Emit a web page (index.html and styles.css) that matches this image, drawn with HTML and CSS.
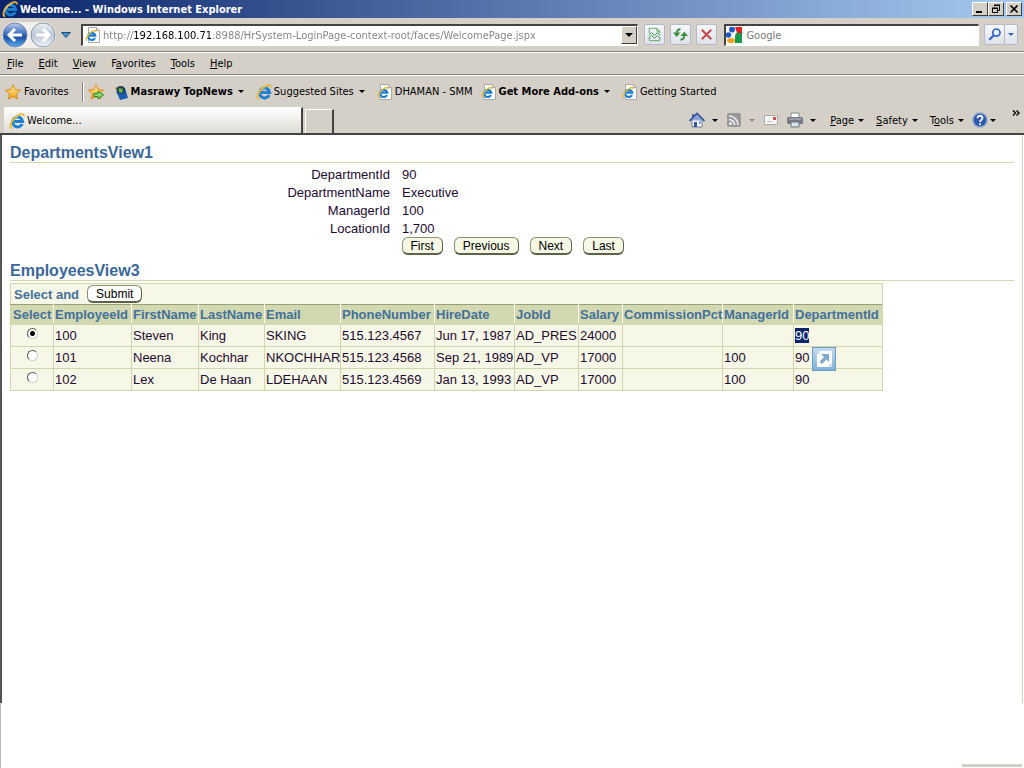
FILE: index.html
```
<!DOCTYPE html>
<html lang="en">
<head>
    <meta charset="UTF-8">
    <title>Welcome...</title>
    <link rel="stylesheet" href="styles.css">
</head>
<body>
<svg class="sprites" aria-hidden="true">
    <defs>
        <linearGradient id="blue" x1="0" y1="0" x2="0" y2="1">
            <stop offset="0" stop-color="#b9cbea"/>
            <stop offset=".4" stop-color="#4a78c4"/>
            <stop offset=".6" stop-color="#1d4fa8"/>
            <stop offset="1" stop-color="#5bb2f0"/>
        </linearGradient>
        <linearGradient id="silver" x1="0" y1="0" x2="0" y2="1">
            <stop offset="0" stop-color="#eceff5"/>
            <stop offset=".5" stop-color="#bcc6d8"/>
            <stop offset="1" stop-color="#eef3fa"/>
        </linearGradient>
        <linearGradient id="gold" x1="0" y1="0" x2="0" y2="1">
            <stop offset="0" stop-color="#fff3a0"/>
            <stop offset="1" stop-color="#f5a011"/>
        </linearGradient>
    </defs>
    <symbol id="ie" viewBox="0 0 16 16">
        <path d="M13.200 11A5 5 0 1 1 13.600 8.400H5.500" fill="none" stroke="#1a7fd0" stroke-width="3"/>
        <path d="M4.200 7.200A4.600 4.600 0 0 1 9.500 4" fill="none" stroke="#62c4f4" stroke-width="1.400"/>
        <path d="M3.200 15C.2 15.400 1 9.600 5.500 5 9.500 1 15.300-.6 14.900 3.400" fill="none" stroke="#edb92f" stroke-width="1.800"/>
    </symbol>
    <symbol id="page" viewBox="0 0 16 16">
        <path d="M3.500.500h8l3 3v12h-11z" fill="#fff" stroke="#a8a8a8"/>
        <path d="M11.500.500v3h3" fill="#ddd" stroke="#a8a8a8"/>
        <path d="M10 11A3.600 3.600 0 1 1 10.300 8.700H4.500" fill="none" stroke="#1a7fd0" stroke-width="2.200"/>
        <path d="M2 13.500C-.2 12.500 3 7.500 6 5.200 9 3 11.500 3 11 5" fill="none" stroke="#edb92f" stroke-width="1.400"/>
    </symbol>
    <symbol id="star" viewBox="0 0 16 16">
        <path d="M8 .8l2.200 4.800 5.200.6-3.900 3.600 1.100 5.200L8 12.400 3.400 15l1.100-5.200L.6 6.200l5.200-.6z" fill="url(#gold)" stroke="#d98a1a"/>
    </symbol>
</svg>

<header class="browser">
    <div class="titlebar">
        <svg class="icon"><use href="#ie"/></svg>
        <span class="title">Welcome... - Windows Internet Explorer</span>
        <div class="window-buttons">
            <button aria-label="Minimize"><svg viewBox="0 0 14 12"><path d="M3 9h6" stroke="#000" stroke-width="2"/></svg></button>
            <button aria-label="Restore"><svg viewBox="0 0 14 12"><path d="M5.500 3.500v-1h5v5h-2M5 2h6M3.500 5.500h5v4h-5zM3 5h6" fill="none" stroke="#000"/></svg></button>
            <button class="close" aria-label="Close"><svg viewBox="0 0 14 12"><path d="M3.500 2.500l7 7M10.500 2.500l-7 7" stroke="#000" stroke-width="1.600"/></svg></button>
        </div>
    </div>

    <div class="navbar">
        <div class="history">
            <button aria-label="Back"><svg viewBox="0 0 26 26"><circle cx="13" cy="13" r="12" fill="url(#blue)" stroke="#6f83ac"/><path d="M20 13H8M13 7l-6 6 6 6" fill="none" stroke="#fff" stroke-width="3"/></svg></button>
            <button aria-label="Forward"><svg viewBox="0 0 26 26"><circle cx="13" cy="13" r="12" fill="url(#silver)" stroke="#8d96a8"/><path d="M6 13h12M13 7l6 6-6 6" fill="none" stroke="#fff" stroke-width="3"/></svg></button>
        </div>
        <button class="recent" aria-label="Recent pages"><svg viewBox="0 0 10 6"><path d="M.5.500h9L5 5.500z" fill="#4b93c4" stroke="#17507e"/></svg></button>
        <div class="field address">
            <svg class="icon"><use href="#page"/></svg>
            <input type="text" aria-label="Address" value="http://192.168.100.71:8988/HrSystem-LoginPage-context-root/faces/WelcomePage.jspx">
            <button class="drop" aria-label="Show addresses"><i class="arrow big"></i></button>
        </div>
        <div class="nav-actions">
            <button class="tool" aria-label="Compatibility View"><svg viewBox="0 0 20 20"><path d="M4.500 9V3.500h8l3 3V9M12.500 3.500v3h3M4.500 13v3.500h11V13" fill="none" stroke="#5ba765"/><path d="M4 11l3-3 3 3 3-3 3 3M4 14l3-3 3 3 3-3 3 3" fill="none" stroke="#388a4a"/></svg></button>
            <button class="tool" aria-label="Refresh"><svg viewBox="0 0 20 20"><path d="M10 4.500C7 4.500 6 6 6 9M10 15.500c3 0 4-1.500 4-5" fill="none" stroke="#3a9140" stroke-width="2"/><path d="M2 8h8l-4 4.500zM10 11.500h8L14 7z" fill="#3a9140"/></svg></button>
            <button class="tool" aria-label="Stop"><svg viewBox="0 0 20 20"><path d="M5 5l10 10M15 5L5 15" stroke="#c4474e" stroke-width="2.200"/></svg></button>
        </div>
        <div class="field search">
            <svg class="icon" viewBox="0 0 16 16"><rect width="16" height="16" fill="#fff"/><path d="M9 0h7v6h-5z" fill="#e02020"/><path d="M10 6h6v10H9V9z" fill="#159a48"/><circle cx="6" cy="2.500" r="3" fill="#2159c4"/><circle cx="2.500" cy="8" r="2.800" fill="#2159c4"/><ellipse cx="5" cy="13.500" rx="4" ry="2.600" fill="#f2a51c"/></svg>
            <input type="text" aria-label="Search" placeholder="Google">
        </div>
        <div class="go">
            <button class="tool" aria-label="Go"><svg viewBox="0 0 20 20"><circle cx="12" cy="8" r="3.800" fill="#e9f2ff" stroke="#3464c8" stroke-width="1.800"/><path d="M9 11l-4.500 4.500" stroke="#3464c8" stroke-width="2.400"/></svg></button>
            <button class="tool narrow" aria-label="Search options"><i class="arrow blue"></i></button>
        </div>
    </div>

    <nav class="menubar">
        <button><u>F</u>ile</button>
        <button><u>E</u>dit</button>
        <button><u>V</u>iew</button>
        <button>F<u>a</u>vorites</button>
        <button><u>T</u>ools</button>
        <button><u>H</u>elp</button>
    </nav>

    <div class="favorites">
        <button class="fav-menu"><svg class="icon"><use href="#star"/></svg>Favorites</button>
        <button class="fav-add" aria-label="Add to Favorites Bar"><svg class="icon" viewBox="0 0 16 16"><use href="#star"/><path d="M6 9.500h4V7l5.500 4-5.500 4v-2.500H6z" fill="#8ad86f" stroke="#27831f"/></svg></button>
        <a class="fav bold" href="#"><svg class="icon" viewBox="0 0 16 16"><path d="M2 4l5-2 3 3-4 5z" fill="#87743c"/><path d="M3 7l9-3 3 10-8 2z" fill="#1c5cb0"/><circle cx="8" cy="6" r="4" fill="#243f55"/><path d="M6 4l4 1-1 4-3-1z" fill="#6dbb45"/></svg>Masrawy TopNews<i class="arrow"></i></a>
        <a class="fav" href="#"><svg class="icon"><use href="#ie"/></svg>Suggested Sites<i class="arrow"></i></a>
        <a class="fav" href="#"><svg class="icon"><use href="#page"/></svg>DHAMAN - SMM</a>
        <a class="fav bold" href="#"><svg class="icon"><use href="#page"/></svg>Get More Add-ons<i class="arrow"></i></a>
        <a class="fav" href="#"><svg class="icon"><use href="#page"/></svg>Getting Started</a>
    </div>

    <div class="tabrow">
        <button class="tab"><svg class="icon"><use href="#ie"/></svg>Welcome...</button>
        <button class="new-tab" aria-label="New Tab"></button>
        <div class="commands">
            <button class="split" aria-label="Home"><svg class="icon" viewBox="0 0 16 16"><path d="M3 8v7h10V8" fill="#fff" stroke="#6c7a9c"/><path d="M3 2h2v4H3z" fill="#5a5f9c"/><path d="M1 8.500L8 2l7 6.500z" fill="#8fa6d4"/><path d="M.5 9L8 1.500 15.500 9" fill="none" stroke="#31559f" stroke-width="1.600"/><path d="M5 15v-5h3v5z" fill="#31559f"/><path d="M10 9h2v3h-2z" fill="#79aee5"/></svg><i class="arrow"></i></button>
            <button class="split" aria-label="Feeds"><svg class="icon" viewBox="0 0 16 16"><rect x="1" y="1" width="14" height="14" rx="2" fill="#989898"/><circle cx="4.500" cy="11.500" r="1.500" fill="#eee"/><path d="M3 7.500a5.500 5.500 0 0 1 5.500 5.500M3 4a9 9 0 0 1 9 9" fill="none" stroke="#eee" stroke-width="1.600"/></svg><i class="arrow grey"></i></button>
            <button class="split" aria-label="Read mail"><svg class="icon" viewBox="0 0 16 16"><path d="M1.500 3.500h13v9h-13z" fill="#f7f7f4" stroke="#aaa"/><path d="M10 5h3v3h-3z" fill="#d34a4a"/><path d="M4 9.500h5" stroke="#bbb"/></svg></button>
            <button class="split" aria-label="Print"><svg class="icon" viewBox="0 0 16 16"><path d="M4 1h8v5H4z" fill="#fff" stroke="#888"/><rect y="5" width="16" height="7" rx="1.500" fill="#777b84"/><path d="M2 7h12" stroke="#bfc2c8"/><path d="M4 10h8v5H4z" fill="#cfe3f1" stroke="#777"/></svg><i class="arrow"></i></button>
            <button class="label"><span><u>P</u>age</span><i class="arrow"></i></button>
            <button class="label"><span><u>S</u>afety</span><i class="arrow"></i></button>
            <button class="label"><span>T<u>o</u>ols</span><i class="arrow"></i></button>
            <button class="help" aria-label="Help"><svg class="icon" viewBox="0 0 16 16"><circle cx="8" cy="8" r="7" fill="#2c58ae" stroke="#8ba3cf" stroke-width="1.500"/><path d="M5.500 6.200C5.500 3 10.500 3 10.500 6 10.500 8 8 7.800 8 10M8 11.200v1.800" fill="none" stroke="#fff" stroke-width="1.800"/></svg><i class="arrow"></i></button>
            <button class="more" aria-label="More commands"><svg viewBox="0 0 8 6"><path d="M1 .5L3.500 3 1 5.500M4.500.500L7 3 4.500 5.500" fill="none" stroke="#000" stroke-width="1.400"/></svg></button>
        </div>
    </div>
</header>

<main>
    <section class="department">
        <h2>DepartmentsView1</h2>
        <dl>
            <dt>DepartmentId</dt><dd>90</dd>
            <dt>DepartmentName</dt><dd>Executive</dd>
            <dt>ManagerId</dt><dd>100</dd>
            <dt>LocationId</dt><dd>1,700</dd>
        </dl>
        <div class="record-nav">
            <button class="btn">First</button>
            <button class="btn">Previous</button>
            <button class="btn">Next</button>
            <button class="btn">Last</button>
        </div>
    </section>

    <section class="employees">
        <h2>EmployeesView3</h2>
        <form class="grid">
            <div class="grid-actions">Select and <button type="button" class="btn">Submit</button></div>
            <table>
                <colgroup>
                    <col class="c-select"><col class="c-id"><col class="c-first"><col class="c-last">
                    <col class="c-email"><col class="c-phone"><col class="c-hire"><col class="c-job">
                    <col class="c-salary"><col class="c-comm"><col class="c-mgr"><col class="c-dept">
                </colgroup>
                <thead>
                    <tr>
                        <th>Select</th><th>EmployeeId</th><th>FirstName</th><th>LastName</th>
                        <th>Email</th><th>PhoneNumber</th><th>HireDate</th><th>JobId</th>
                        <th>Salary</th><th>CommissionPct</th><th>ManagerId</th><th>DepartmentId</th>
                    </tr>
                </thead>
                <tbody>
                    <tr>
                        <td class="pick"><input type="radio" name="emp" aria-label="Select 100" checked></td>
                        <td>100</td><td>Steven</td><td>King</td><td>SKING</td><td>515.123.4567</td>
                        <td>Jun 17, 1987</td><td>AD_PRES</td><td>24000</td><td></td><td></td><td><mark>90</mark></td>
                    </tr>
                    <tr>
                        <td class="pick"><input type="radio" name="emp" aria-label="Select 101"></td>
                        <td>101</td><td>Neena</td><td>Kochhar</td><td>NKOCHHAR</td><td>515.123.4568</td>
                        <td>Sep 21, 1989</td><td>AD_VP</td><td>17000</td><td></td><td>100</td>
                        <td class="with-accel">90<button type="button" class="accel" aria-label="Accelerators"><svg viewBox="0 0 22 22"><path d="M4 6h3V3h12v13h-3v3H4z" fill="#fff"/><path d="M4 6h3V3H4zM16 19v-3h3v3z" fill="#cfe1f1"/><path d="M8 6h8v8l-2.500-2.500-4.500 4.500L6.500 13.500 11 9z" fill="#7fa8cd"/></svg></button></td>
                    </tr>
                    <tr>
                        <td class="pick"><input type="radio" name="emp" aria-label="Select 102"></td>
                        <td>102</td><td>Lex</td><td>De Haan</td><td>LDEHAAN</td><td>515.123.4569</td>
                        <td>Jan 13, 1993</td><td>AD_VP</td><td>17000</td><td></td><td>100</td><td>90</td>
                    </tr>
                </tbody>
            </table>
        </form>
    </section>
</main>
<footer></footer>
</body>
</html>
```
FILE: styles.css
```
* {
    box-sizing: border-box;
}
body {
    margin: 0;
    min-height: 100vh;
    display: flex;
    flex-direction: column;
    background: #fff;
    font-family: "Liberation Sans", Arial, sans-serif;
    font-size: 13px;
    color: #1c0a30;
}
button {
    font: inherit;
    color: inherit;
    background: none;
    border: 0;
    padding: 0;
}
svg {
    display: block;
}
.sprites {
    position: absolute;
    width: 0;
    height: 0;
}
.icon {
    width: 16px;
    height: 16px;
    flex: none;
}
.arrow {
    border: 3px solid transparent;
    border-top-color: #000;
    border-bottom: 0;
    flex: none;
}
.arrow.big {
    border-width: 4px 4px 0;
}
.arrow.grey {
    border-top-color: #888;
}
.arrow.blue {
    border-top-color: #2f66b8;
}

/* browser chrome */
.browser {
    background: #d4d0c8;
    border-bottom: 2px solid #444;
    font-family: "DejaVu Sans Condensed", Tahoma, sans-serif;
    font-size: 11px;
    color: #000;
}
.titlebar {
    display: flex;
    align-items: center;
    height: 18px;
    padding: 0 2px;
    gap: 2px;
    background: linear-gradient(90deg, #0a246a, #a6caf0);
    color: #fff;
    font-weight: bold;
}
.window-buttons {
    display: flex;
    margin-left: auto;
}
.window-buttons button {
    width: 16px;
    height: 14px;
    background: #d4d0c8;
    border: 1px solid #404040;
    border-top-color: #fff;
    border-left-color: #fff;
}
.window-buttons .close {
    margin-left: 2px;
}
.navbar {
    display: flex;
    align-items: center;
    height: 34px;
    padding: 0 6px 0 2px;
    border-bottom: 1px solid #808080;
}
.history {
    display: flex;
    gap: 2px;
    border-radius: 13px;
    background: #f0efec;
}
.history svg {
    width: 26px;
    height: 26px;
}
.recent {
    margin: 0 10px 0 5px;
}
.recent svg {
    width: 10px;
    height: 6px;
}
.field {
    display: flex;
    align-items: center;
    height: 22px;
    padding-left: 2px;
    background: #fff;
    border: 1px solid #fff;
    border-top: 2px solid #444;
    border-left: 2px solid #444;
}
.field input {
    flex: 1;
    min-width: 0;
    border: 0;
    padding: 0;
    font: inherit;
    outline: 0;
    background: none;
}
.address {
    flex: 560;
    gap: 2px;
}
/* host part of the address is darker than the rest */
.address input {
    background: linear-gradient(90deg, #808080 30px, #000 30px, #000 108px, #808080 108px);
    -webkit-background-clip: text;
    background-clip: text;
    color: transparent;
}
.drop {
    display: flex;
    align-items: center;
    justify-content: center;
    width: 16px;
    height: 18px;
    background: #d4d0c8;
    border: 1px solid #404040;
    border-top-color: #fff;
    border-left-color: #fff;
}
.nav-actions {
    display: flex;
    gap: 5px;
    margin: 0 7px 0 6px;
}
.tool {
    display: flex;
    align-items: center;
    justify-content: center;
    width: 21px;
    height: 21px;
    border: 1px solid #b4b9c6;
    border-radius: 2px;
    background: linear-gradient(#f6f7fa, #dfe2ea);
}
.tool svg {
    width: 19px;
    height: 19px;
}
.search {
    flex: 255;
    gap: 4px;
    padding-left: 0;
}
.search input::placeholder {
    color: #777;
    opacity: 1;
}
.go {
    display: flex;
    margin-left: 5px;
}
.go .narrow {
    width: 13px;
    border-left: 0;
}
.menubar {
    display: flex;
    align-items: center;
    gap: 15px;
    height: 23px;
    padding: 0 7px;
    border-top: 1px solid #fff;
    border-bottom: 1px solid #808080;
}
.favorites {
    display: flex;
    align-items: center;
    height: 32px;
    padding: 0 5px;
    border-top: 1px solid #fff;
}
.fav-menu {
    display: flex;
    align-items: center;
    gap: 3px;
    height: 20px;
    padding-right: 13px;
    border-right: 1px solid #808080;
}
.fav-add {
    height: 20px;
    padding: 2px 9px 2px 4px;
    border-left: 1px solid #fff;
}
.fav {
    display: flex;
    align-items: center;
    gap: 2px;
    margin-right: 8px;
    color: #000;
    text-decoration: none;
}
.fav .arrow {
    margin: 0 4px 0 3px;
}
.bold {
    font-weight: bold;
}
.tabrow {
    display: flex;
    align-items: flex-end;
    height: 26px;
    padding-left: 4px;
}
.tab {
    display: flex;
    align-items: center;
    gap: 2px;
    width: 299px;
    height: 26px;
    padding-left: 5px;
    background: linear-gradient(#fff, #dedbd5);
    border-top: 1px solid #fff;
    border-right: 2px solid #444;
}
.new-tab {
    width: 29px;
    height: 24px;
    margin-left: 2px;
    border: 1px solid #fff;
    border-right: 2px solid #444;
    border-bottom: 0;
}
.commands {
    display: flex;
    align-items: center;
    height: 26px;
    margin-left: auto;
    padding-right: 4px;
}
.commands button {
    display: flex;
    align-items: center;
}
.split {
    gap: 7px;
    margin-right: 8px;
}
.label {
    gap: 4px;
    margin: 0 6px;
}
.help {
    gap: 2px;
    margin: 0 16px 0 2px;
}
.commands .more {
    align-self: flex-start;
    padding-top: 3px;
}
.more svg {
    width: 8px;
    height: 6px;
}

/* page */
main {
    flex: 1;
    padding: 8px 8px 0;
    border-left: 2px solid #555;
    border-right: 1px solid #d4d0c8;
    margin-right: 1px;
}
h2 {
    margin: 0;
    height: 20px;
    line-height: 19px;
    font-size: 16px;
    color: #3a6798;
    border-bottom: 1px solid #d2d8b0;
}
dl {
    display: grid;
    grid-template-columns: 38% 1fr;
    column-gap: 12px;
    margin: 3px 0 0;
    padding-right: 4px;
    line-height: 18px;
}
dt {
    text-align: right;
}
dd {
    margin: 0;
}
.record-nav {
    display: flex;
    gap: 11px;
    margin-top: -1px;
    padding-left: calc(38% + 10px);
}
.btn {
    height: 18px;
    padding: 0 8px;
    line-height: 16px;
    font-size: 12px;
    font-weight: normal;
    color: #000;
    background: #f5f8e4;
    border: 1px solid #8b9075;
    border-right-color: #5c6148;
    border-bottom: 2px solid #5c6148;
    border-radius: 6px;
}
.employees {
    margin-top: 6px;
}
.grid {
    width: 873px;
    margin-top: 2px;
    background: #f7f7e7;
}
.grid-actions {
    display: flex;
    align-items: center;
    gap: 8px;
    height: 21px;
    padding-left: 3px;
    border: 1px solid #d0d6ae;
    border-bottom: 0;
    font-weight: bold;
    color: #44709c;
}
.grid-actions .btn {
    background: #fff;
}
table {
    width: 100%;
    table-layout: fixed;
    border-collapse: collapse;
}
.c-select { width: 43px; }
.c-id { width: 78px; }
.c-first { width: 67px; }
.c-last { width: 66px; }
.c-email { width: 76px; }
.c-phone { width: 94px; }
.c-hire { width: 80px; }
.c-job { width: 64px; }
.c-salary { width: 44px; }
.c-comm { width: 100px; }
.c-mgr { width: 71px; }
th, td {
    padding: 0 1px;
    text-align: left;
    white-space: nowrap;
    border: 1px solid #d0d6ae;
}
th {
    height: 20px;
    background: #d2d8b0;
    color: #44709c;
    border-color: #99a077 #f7f7e7 #d2d8b0;
}
th:first-child {
    padding-left: 2px;
    border-left-color: #d0d6ae;
}
th:last-child {
    border-right-color: #d0d6ae;
}
td {
    height: 22px;
}
.pick {
    text-align: center;
}
.pick input {
    appearance: none;
    display: block;
    width: 11px;
    height: 11px;
    margin: 0 auto 4px;
    border: 1px solid #555;
    border-right-color: #d4d0c8;
    border-bottom-color: #d4d0c8;
    border-radius: 50%;
    background: #fff;
}
.pick input:checked {
    background: radial-gradient(#000 2px, #fff 3px);
}
mark {
    background: #0a246a;
    color: #fff;
}
.with-accel {
    position: relative;
}
.accel {
    position: absolute;
    top: 0;
    left: 18px;
    width: 24px;
    height: 24px;
    border: 1px solid #6b9cc4;
    background: linear-gradient(#c3daee, #82b0d8);
}
.accel svg {
    width: 22px;
    height: 22px;
}
footer {
    height: 65px;
    border-left: 1px solid #bbb;
    background: linear-gradient(#d4d0c8, #d4d0c8) right 2px bottom 1px / 60px 3px no-repeat;
}
```
